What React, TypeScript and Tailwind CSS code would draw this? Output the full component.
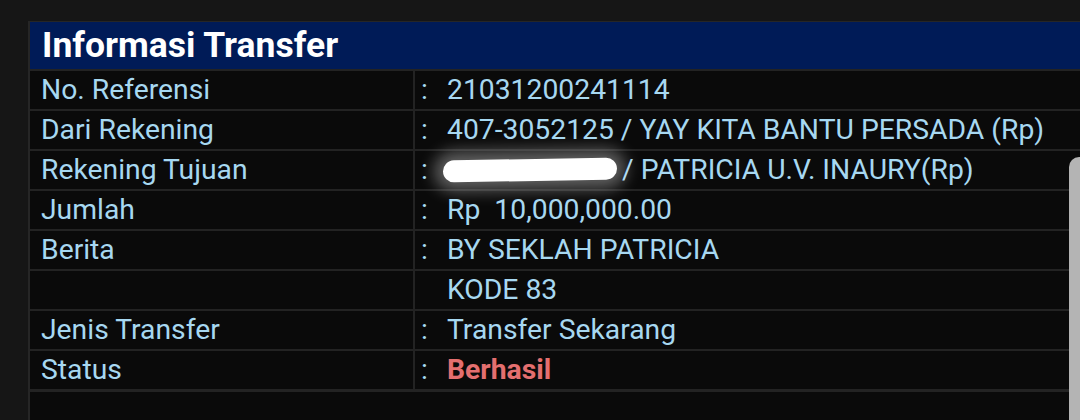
import React from "react";

type Row = { label: string; colon: boolean; value: React.ReactNode };

const rows: Row[] = [
  { label: "No. Referensi", colon: true, value: "21031200241114" },
  { label: "Dari Rekening", colon: true, value: "407-3052125 / YAY KITA BANTU PERSADA (Rp)" },
  {
    label: "Rekening Tujuan",
    colon: true,
    value: (
      <span className="flex items-center">
        <span className="inline-block h-[22px] w-[174px] -ml-[4px] mr-[5px] -rotate-1 rounded-full bg-white shadow-[0_0_16px_9px_rgba(255,255,255,0.35)]" />
        <span>/ PATRICIA U.V. INAURY(Rp)</span>
      </span>
    ),
  },
  { label: "Jumlah", colon: true, value: <span className="whitespace-pre">Rp  10,000,000.00</span> },
  { label: "Berita", colon: true, value: "BY SEKLAH PATRICIA" },
  { label: "", colon: false, value: "KODE 83" },
  { label: "Jenis Transfer", colon: true, value: "Transfer Sekarang" },
  {
    label: "Status",
    colon: true,
    value: <span className="font-bold text-[#e46f6f]">Berhasil</span>,
  },
];

export default function App() {
  return (
    <div
      className="relative h-[420px] w-[1080px] overflow-hidden bg-[#161616] pl-[28px] pt-[21px]"
      style={{ fontFamily: "Roboto, 'Noto Sans', sans-serif" }}
    >
      <div className="h-[420px] w-[1080px] border-l-2 border-t border-[#262626] bg-[#0a0a0a]">
        <div className="flex h-[47px] items-center bg-[#001b57] pl-[12px] text-[35.5px] font-bold text-white">
          Informasi Transfer
        </div>
        {rows.map((r, i) => (
          <div
            key={i}
            className="flex h-[40px] items-center border-t-2 border-[#232323] text-[28.3px] text-[#a7d8f1]"
          >
            <div className="flex h-full w-[383px] items-center pl-[11px]">{r.label}</div>
            <div className="flex h-full items-center border-l-2 border-[#232323] pl-[6px]">
              <span className="w-[26px]">{r.colon ? ":" : ""}</span>
              {r.value}
            </div>
          </div>
        ))}
        <div className="border-t-[3px] border-[#232323]" />
      </div>
      <div className="absolute left-[1069px] top-[157px] h-[280px] w-[20px] rounded-tl-[10px] bg-[#b4b4b4]" />
    </div>
  );
}
